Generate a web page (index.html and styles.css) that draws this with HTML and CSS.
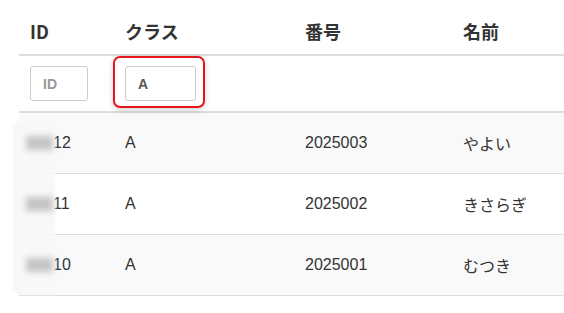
FILE: index.html
```html
<!DOCTYPE html>
<html>
<head>
<meta charset="utf-8">
<title>一覧</title>
<link rel="stylesheet" href="styles.css">
</head>
<body>
<div class="list_wrap">
	<table class="list">
		<colgroup>
			<col class="c_id">
			<col class="c_class">
			<col class="c_no">
			<col class="c_name">
		</colgroup>
		<thead>
			<tr class="head">
				<th>ID</th>
				<th>クラス</th>
				<th>番号</th>
				<th>名前</th>
			</tr>
			<tr class="filter">
				<td><input class="f_id" type="text" placeholder="ID"></td>
				<td><span class="focus_ring"><input class="f_class" type="text" value="A"></span></td>
				<td></td>
				<td></td>
			</tr>
		</thead>
		<tbody>
			<tr class="odd">
				<td><span class="blur"></span>12</td>
				<td>A</td>
				<td>2025003</td>
				<td>やよい</td>
			</tr>
			<tr>
				<td><span class="blur"></span>11</td>
				<td>A</td>
				<td>2025002</td>
				<td>きさらぎ</td>
			</tr>
			<tr class="odd">
				<td><span class="blur"></span>10</td>
				<td>A</td>
				<td>2025001</td>
				<td>むつき</td>
			</tr>
		</tbody>
	</table>
	<div class="cover"></div>
</div>
</body>
</html>
```

FILE: styles.css
```css
body{margin: 0;padding: 8px 0 0 19px;background: #fff;color: #333;font-family: "Liberation Sans", "Noto Sans CJK JP", sans-serif;overflow: hidden;}
.list_wrap{position: relative;}
.list{border-collapse: collapse;width: 100%;table-layout: fixed;}
.c_id{width: 95px;}
.c_class{width: 180px;}
.c_no{width: 158px;}
.list th,.list td{padding: 0 11px;text-align: left;}
.head th{height: 46px;font-size: 18px;font-weight: bold;font-family: "Noto Sans CJK JP", sans-serif;line-height: 1;border-bottom: 2px solid #ddd;}
.filter td{height: 55px;border-bottom: 2px solid #ddd;}
.filter input{box-sizing: border-box;height: 35px;border: 1px solid #ccc;border-radius: 3px;padding: 0 12px;font-family: "Liberation Sans", sans-serif;font-size: 14px;font-weight: bold;color: #555;background: #fff;outline: none;display: block;}
.filter input::placeholder{color: #999;}
.f_id{width: 58px;}
.f_class{width: 71px;}
.focus_ring{position: relative;display: block;width: 71px;}
.focus_ring::after{content: "";position: absolute;left: -12px;right: -9px;top: -10px;bottom: -7px;border: 2px solid #e8141b;border-radius: 7px;box-shadow: 0 2px 6px rgba(0,0,0,.18);pointer-events: none;}
tbody td{height: 60px;font-size: 16px;border-bottom: 1px solid #ddd;}
tbody tr.odd td{background: #f9f9f9;}
.blur{position: relative;z-index: 2;display: inline-block;width: 27px;height: 14px;margin-left: -4px;vertical-align: -2px;background: #c4c4c4;filter: blur(3px);}
/* hides the row lines under the masked ids */
.cover{position: absolute;left: -6px;top: 114px;width: 42px;height: 172px;background: #f8f8f8;filter: blur(1.5px);z-index: 1;}
```
